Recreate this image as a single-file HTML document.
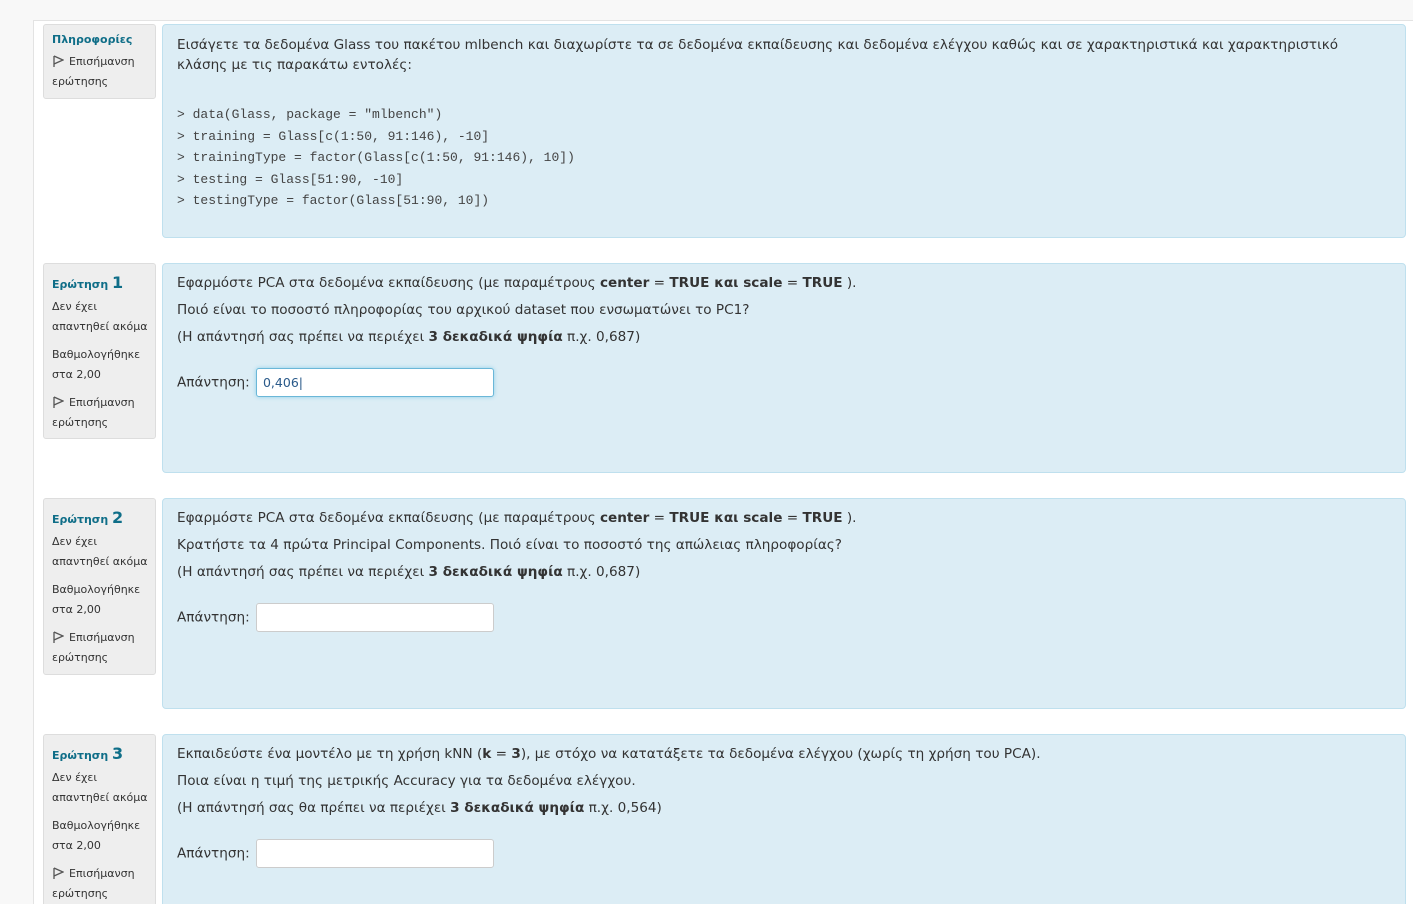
<!DOCTYPE html>
<html style="overflow:hidden"><head><meta charset="utf-8"><style>
html,body{margin:0;width:1413px;height:904px;overflow:hidden}
body{background:#f8f8f8;font-family:"DejaVu Sans","Liberation Sans",sans-serif;color:#333;position:relative}
.wrap{position:absolute;left:33px;top:20px;width:1400px;height:900px;background:#fff;border-left:1px solid #e3e3e3;border-top:1px solid #e3e3e3}
.side{position:absolute;left:43px;width:113px;background:#eee;border:1px solid #ddd;border-radius:3px;box-sizing:border-box;padding:9px 0 0 8px;font-size:11px;line-height:20px;color:#333}
.side .t{color:#0f6e88;font-weight:bold;font-size:11px}
.side .t b{font-size:16px}
.side p{margin:0 0 8px}
.flag{display:inline-block;width:12px;height:12px;vertical-align:-2px;margin-right:5px}
.box{position:absolute;left:162px;width:1244px;background:#dcedf5;border:1px solid #bfe0ee;border-radius:4px;box-sizing:border-box;padding:10px 14px;font-size:13.6px;color:#333}
.box p{margin:0;line-height:27px}
pre{font-family:"Liberation Mono",monospace;font-size:13px;line-height:21.5px;margin:29px 0 0;color:#444}
.ans{margin-top:17px;line-height:28px}
.in{display:inline-block;vertical-align:middle;width:238px;height:29px;background:#fff;border:1px solid #ccc;border-radius:3px;box-sizing:border-box;margin-left:2px;font-size:12.5px;line-height:27px;padding-left:6px;color:#2a5a8a}
.in.f{border-color:#6bb7d8;box-shadow:0 0 4px #8fd0ea}
</style></head><body>
<div class="wrap"></div>
<div class="side" style="top:24px;height:75px;padding-top:5px">
<p class="t" style="margin:0 0 2px">Πληροφορίες</p>
<p><svg class="flag" viewBox="0 0 12 12"><path d="M2 1v11M2 1l9 4-9 4" fill="none" stroke="#555" stroke-width="1.3"/></svg>Επισήμανση<br>ερώτησης</p></div>
<div class="box" style="top:24px;height:214px;padding-top:10px"><p style="line-height:20px">Εισάγετε τα δεδομένα Glass του πακέτου mlbench και διαχωρίστε τα σε δεδομένα εκπαίδευσης και δεδομένα ελέγχου καθώς και σε χαρακτηριστικά και χαρακτηριστικό κλάσης με τις παρακάτω εντολές:</p>
<pre>&gt; data(Glass, package = "mlbench")
&gt; training = Glass[c(1:50, 91:146), -10]
&gt; trainingType = factor(Glass[c(1:50, 91:146), 10])
&gt; testing = Glass[51:90, -10]
&gt; testingType = factor(Glass[51:90, 10])</pre></div>

<div class="side" style="top:263px;height:176px"><p class="t" style="margin:0 0 2px">Ερώτηση <b>1</b></p><p>Δεν έχει<br>απαντηθεί ακόμα</p><p>Βαθμολογήθηκε<br>στα 2,00</p><p><svg class="flag" viewBox="0 0 12 12"><path d="M2 1v11M2 1l9 4-9 4" fill="none" stroke="#555" stroke-width="1.3"/></svg>Επισήμανση<br>ερώτησης</p></div>
<div class="box" style="top:263px;height:210px;padding-top:6px"><p>Εφαρμόστε PCA στα δεδομένα εκπαίδευσης (με παραμέτρους <b>center</b> = <b>TRUE και scale</b> = <b>TRUE</b> ).</p><p>Ποιό είναι το ποσοστό πληροφορίας του αρχικού dataset που ενσωματώνει το PC1?</p><p>(Η απάντησή σας πρέπει να περιέχει <b>3 δεκαδικά ψηφία</b> π.χ. 0,687)</p><div class="ans">Απάντηση: <span class="in f">0,406|</span></div></div>

<div class="side" style="top:498px;height:177px"><p class="t" style="margin:0 0 2px">Ερώτηση <b>2</b></p><p>Δεν έχει<br>απαντηθεί ακόμα</p><p>Βαθμολογήθηκε<br>στα 2,00</p><p><svg class="flag" viewBox="0 0 12 12"><path d="M2 1v11M2 1l9 4-9 4" fill="none" stroke="#555" stroke-width="1.3"/></svg>Επισήμανση<br>ερώτησης</p></div>
<div class="box" style="top:498px;height:211px;padding-top:6px"><p>Εφαρμόστε PCA στα δεδομένα εκπαίδευσης (με παραμέτρους <b>center</b> = <b>TRUE και scale</b> = <b>TRUE</b> ).</p><p>Κρατήστε τα 4 πρώτα Principal Components. Ποιό είναι το ποσοστό της απώλειας πληροφορίας?</p><p>(Η απάντησή σας πρέπει να περιέχει <b>3 δεκαδικά ψηφία</b> π.χ. 0,687)</p><div class="ans">Απάντηση: <span class="in"></span></div></div>

<div class="side" style="top:734px;height:190px"><p class="t" style="margin:0 0 2px">Ερώτηση <b>3</b></p><p>Δεν έχει<br>απαντηθεί ακόμα</p><p>Βαθμολογήθηκε<br>στα 2,00</p><p><svg class="flag" viewBox="0 0 12 12"><path d="M2 1v11M2 1l9 4-9 4" fill="none" stroke="#555" stroke-width="1.3"/></svg>Επισήμανση<br>ερώτησης</p></div>
<div class="box" style="top:734px;height:200px;padding-top:6px"><p>Εκπαιδεύστε ένα μοντέλο με τη χρήση kNN (<b>k</b> = <b>3</b>), με στόχο να κατατάξετε τα δεδομένα ελέγχου (χωρίς τη χρήση του PCA).</p><p>Ποια είναι η τιμή της μετρικής Accuracy για τα δεδομένα ελέγχου.</p><p>(Η απάντησή σας θα πρέπει να περιέχει <b>3 δεκαδικά ψηφία</b> π.χ. 0,564)</p><div class="ans">Απάντηση: <span class="in"></span></div></div>
</body></html>
